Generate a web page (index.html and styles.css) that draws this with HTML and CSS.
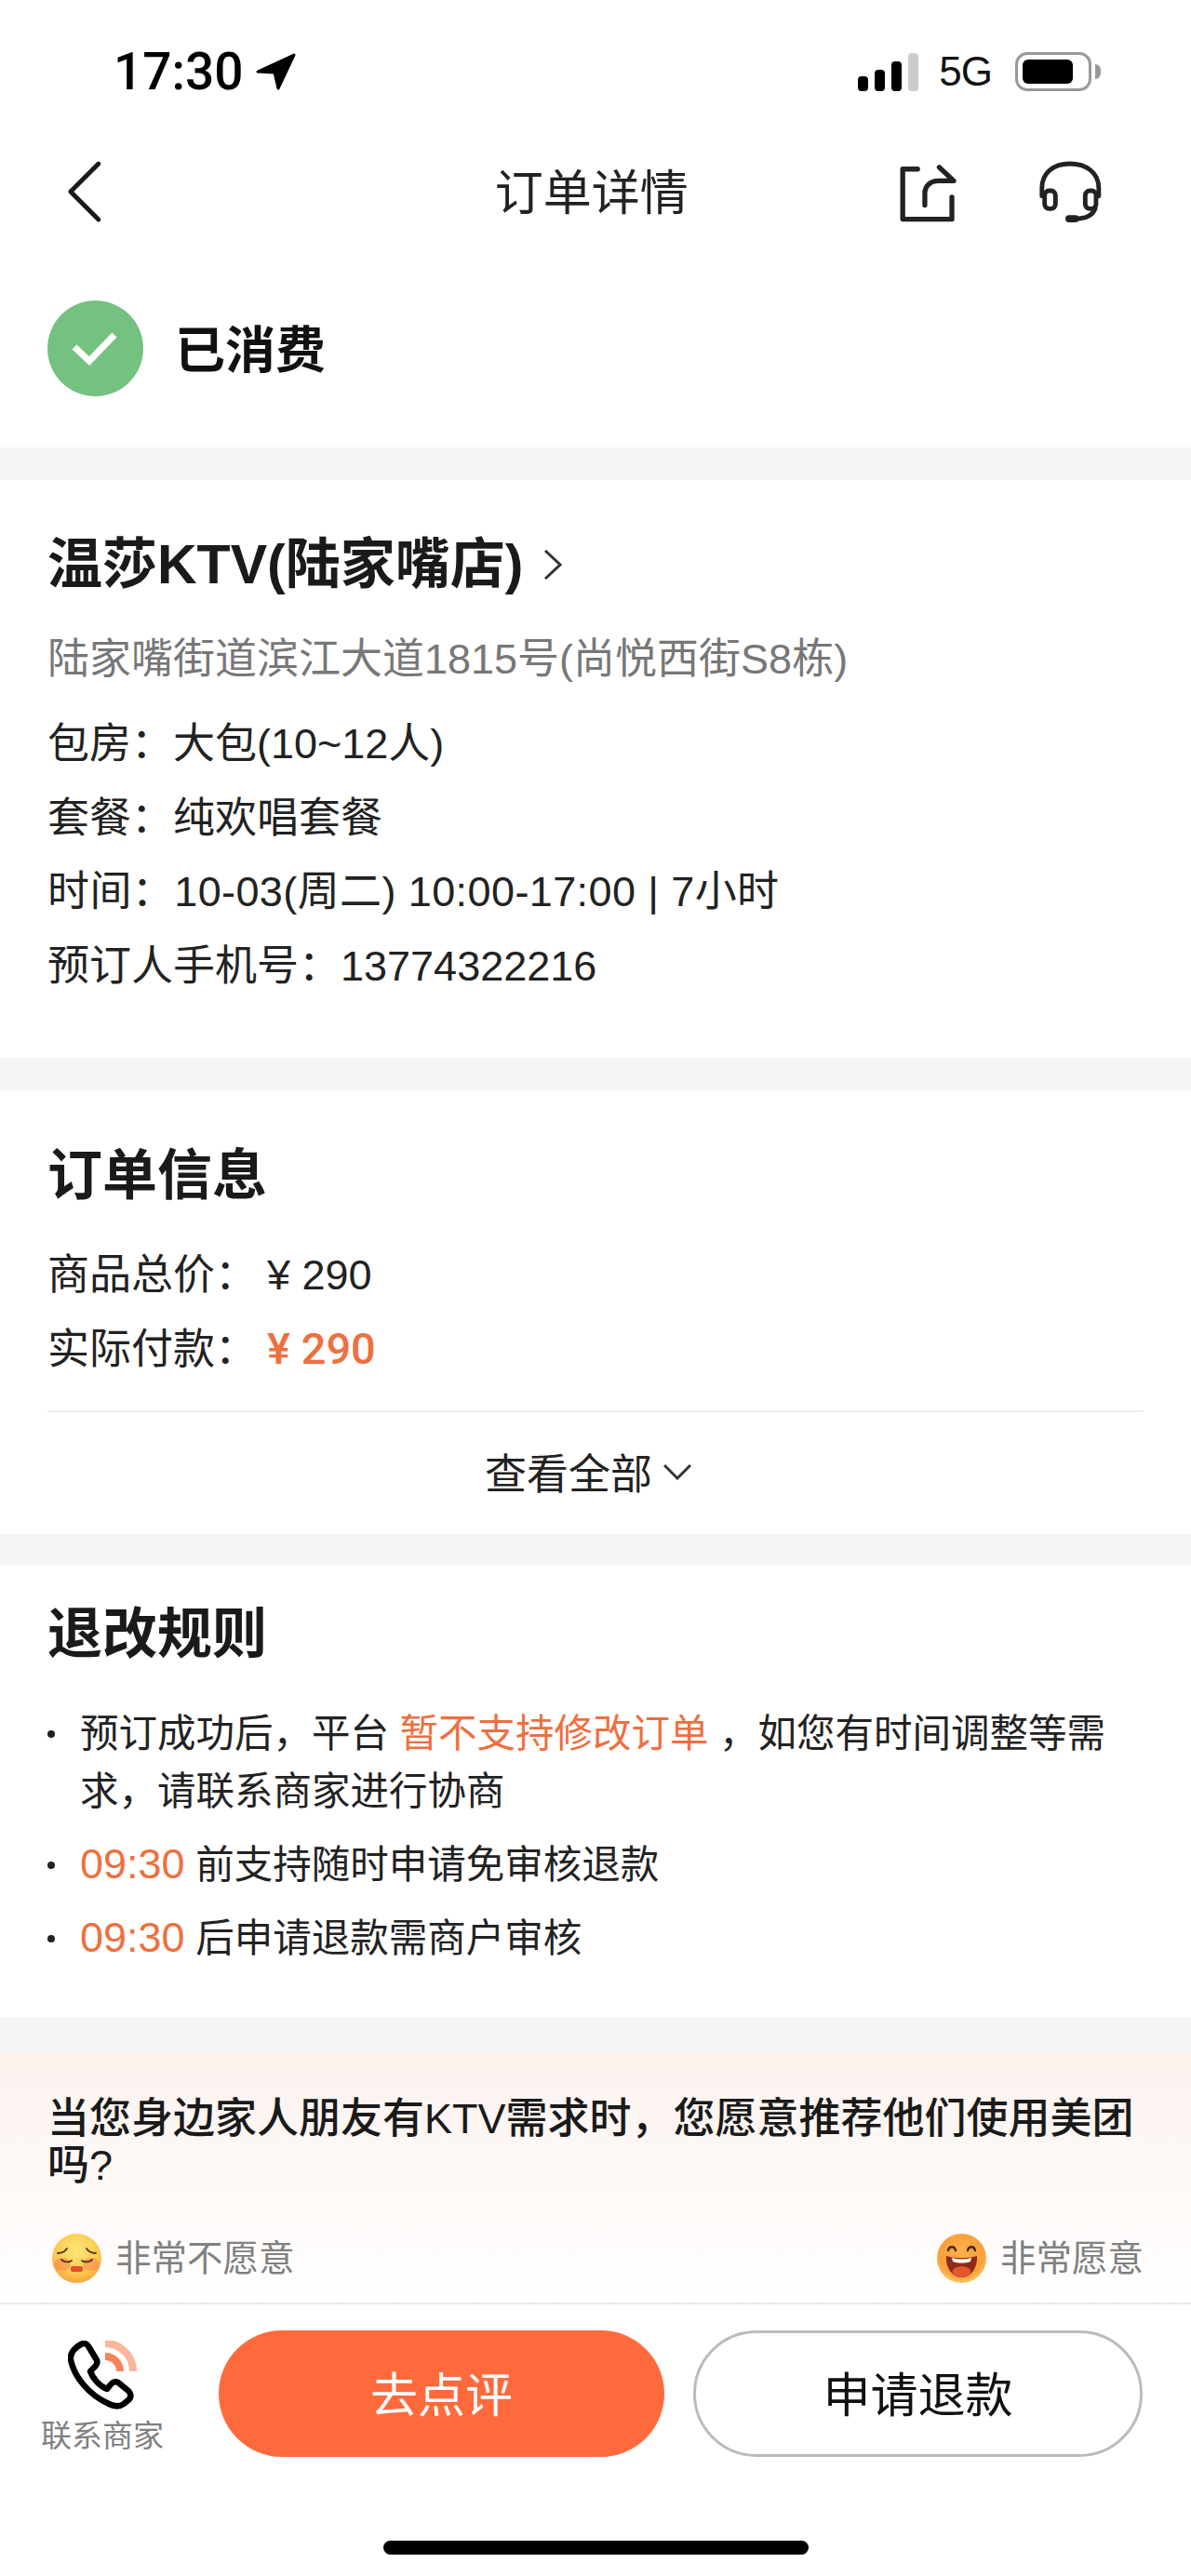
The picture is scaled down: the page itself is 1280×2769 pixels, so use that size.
FILE: index.html
```html
<!DOCTYPE html>
<html lang="zh-CN">
<head>
	<meta charset="UTF-8">
	<meta name="viewport" content="width=device-width, initial-scale=1.0">
	<title>订单详情</title>
	<link rel="stylesheet" href="styles.css">
</head>
<body>
	<div class="status-bar">
		<div class="status-left">
			<span class="time">17:30</span>
			<svg class="loc-icon" viewBox="0 0 43 40"><path d="M41 2 L2 20 L20 21 L24 38 Z" fill="#000" stroke="#000" stroke-width="3" stroke-linejoin="round"/></svg>
		</div>
		<div class="status-right">
			<div class="signal">
				<span class="bar bar-1"></span>
				<span class="bar bar-2"></span>
				<span class="bar bar-3"></span>
				<span class="bar bar-4"></span>
			</div>
			<span class="net">5G</span>
			<div class="battery"><span class="battery-fill"></span></div>
			<span class="battery-nub"></span>
		</div>
	</div>

	<div class="nav">
		<svg class="nav-back" viewBox="0 0 45 70"><path d="M37 4 L6 35 L37 66" fill="none" stroke="#1a1a1a" stroke-width="5" stroke-linecap="round" stroke-linejoin="round"/></svg>
		<h1 class="nav-title">订单详情</h1>
		<svg class="nav-share" viewBox="0 0 75 75" fill="none" stroke="#222" stroke-width="5.5" stroke-linecap="round" stroke-linejoin="round">
			<path d="M27 12 H10.5 V67.5 H65 V43"/>
			<path d="M51 10 L67 25 H50 C41 25 35 31 35 39 V52"/>
		</svg>
		<svg class="nav-help" viewBox="0 0 77 77" fill="none" stroke="#222" stroke-width="5" stroke-linecap="round" stroke-linejoin="round">
			<path d="M7 43 V34 C7 17 20 7 38 7 C56 7 70 17 70 34 V43"/>
			<rect x="10" y="37" width="12" height="20" rx="5"/>
			<rect x="55" y="37" width="12" height="20" rx="5"/>
			<path d="M66 57 C63 64 55 68 44 68"/>
			<path d="M37 68 H44" stroke-width="8"/>
		</svg>
	</div>

	<div class="state">
		<svg class="state-icon" viewBox="0 0 103 103">
			<circle cx="51.5" cy="51.5" r="51.5" fill="#74c180"/>
			<path d="M29 50 L45 65 L72 37" fill="none" stroke="#fff" stroke-width="7"/>
		</svg>
		<span class="state-text">已消费</span>
	</div>

	<div class="section store">
		<h2 class="store-name">温莎KTV(陆家嘴店)
			<svg class="store-arrow" viewBox="0 0 20 32"><path d="M2 1 L18 16 L2 31" fill="none" stroke="#333" stroke-width="3"/></svg>
		</h2>
		<p class="address">陆家嘴街道滨江大道1815号(尚悦西街S8栋)</p>
		<ul class="info-list">
			<li>包房：大包(10~12人)</li>
			<li>套餐：纯欢唱套餐</li>
			<li class="info-time">时间：10-03(周二) 10:00-17:00 | 7小时</li>
			<li>预订人手机号：13774322216</li>
		</ul>
	</div>

	<div class="section order">
		<h2 class="section-title">订单信息</h2>
		<ul class="info-list price-list">
			<li>商品总价：<span class="price">¥ 290</span></li>
			<li>实际付款：<span class="price price-paid">¥ 290</span></li>
		</ul>
		<div class="more">
			<span>查看全部</span>
			<svg class="more-arrow" viewBox="0 0 30 18"><path d="M1 2 L15 16 L29 2" fill="none" stroke="#333" stroke-width="3"/></svg>
		</div>
	</div>

	<div class="section rules">
		<h2 class="section-title">退改规则</h2>
		<ul class="rule-list">
			<li>预订成功后，平台 <span class="accent">暂不支持修改订单</span> ，如您有时间调整等需求，请联系商家进行协商</li>
			<li><span class="accent rule-time">09:30</span> 前支持随时申请免审核退款</li>
			<li><span class="accent rule-time">09:30</span> 后申请退款需商户审核</li>
		</ul>
	</div>

	<div class="survey">
		<p class="survey-title">当您身边家人朋友有KTV需求时，您愿意推荐他们使用美团吗?</p>
		<div class="survey-options">
			<div class="option option-low">
				<svg class="face" viewBox="0 0 53 53">
					<defs>
						<radialGradient id="skin-a" cx="50%" cy="35%" r="70%">
							<stop offset="0" stop-color="#fde678"/>
							<stop offset="0.65" stop-color="#fcc94f"/>
							<stop offset="1" stop-color="#f79a3e"/>
						</radialGradient>
					</defs>
					<circle cx="26.5" cy="26.5" r="26.5" fill="url(#skin-a)"/>
					<ellipse cx="11" cy="33" rx="9" ry="7" fill="#f9824e" opacity="0.55"/>
					<ellipse cx="42" cy="33" rx="9" ry="7" fill="#f9824e" opacity="0.55"/>
					<g fill="none" stroke="#4b3320" stroke-width="1.8" stroke-linecap="round">
						<path d="M6 21 C10 21 14 19 16 16"/>
						<path d="M47 21 C43 21 39 19 37 16"/>
						<path d="M10 28 C13 31 18 31 21 29"/>
						<path d="M43 28 C40 31 35 31 32 29"/>
					</g>
					<rect x="20" y="35" width="13" height="6" rx="2" fill="#e4512b"/>
				</svg>
				<span>非常不愿意</span>
			</div>
			<div class="option">
				<svg class="face" viewBox="0 0 53 53">
					<defs>
						<radialGradient id="skin-b" cx="50%" cy="40%" r="65%">
							<stop offset="0" stop-color="#fbb04a"/>
							<stop offset="0.7" stop-color="#f8a03c"/>
							<stop offset="1" stop-color="#f9d66a"/>
						</radialGradient>
					</defs>
					<circle cx="26.5" cy="26.5" r="26.5" fill="url(#skin-b)"/>
					<g fill="none" stroke="#4b2a18" stroke-width="2.4" stroke-linecap="round">
						<path d="M12 18 C13 13 19 13 20 18"/>
						<path d="M33 18 C34 13 40 13 41 18"/>
					</g>
					<path d="M10 24 C20 27 33 27 43 24 C44 37 36 47 26.5 47 C17 47 9 37 10 24 Z" fill="#8e2a16"/>
					<path d="M16 26 C23 28 30 28 37 26 L36 30 C30 32 23 32 17 30 Z" fill="#fff"/>
					<ellipse cx="26.5" cy="41" rx="10" ry="6" fill="#e4572c"/>
				</svg>
				<span>非常愿意</span>
			</div>
		</div>
	</div>

	<div class="footer">
		<div class="footer-row">
			<div class="contact">
				<svg class="contact-icon" viewBox="0 0 80 76" fill="none">
					<path d="M40 3 A30 30 0 0 1 70 33" stroke="#f9b79b" stroke-width="8"/>
					<path d="M40 17 A16 16 0 0 1 56 33" stroke="#f5845a" stroke-width="8"/>
					<path d="M14 4 C17 2 20 3 22 6 L31 21 C32 24 31 26 29 28 L24 33 C27 41 34 49 42 52 L47 46 C49 44 52 44 54 45 L65 54 C68 57 68 60 66 63 L60 68 C56 71 50 71 44 68 C22 58 6 38 3 20 C2 13 8 7 14 4 Z" stroke="#000" stroke-width="6.5" stroke-linejoin="round"/>
				</svg>
				<span class="contact-text">联系商家</span>
			</div>
			<button class="btn btn-main">去点评</button>
			<button class="btn btn-line">申请退款</button>
		</div>
		<div class="home-bar"></div>
	</div>
</body>
</html>
```

FILE: styles.css
```css
*{ box-sizing: border-box; }
body{
	margin: 0; width: 1280px; background: #fff; color: #222;
	font-family: "Liberation Sans", "Noto Sans CJK SC", sans-serif;
}
h1, h2, p, ul{ margin: 0; padding: 0; }
ul{ list-style: none; }

/* status bar */
.status-bar{
	display: flex; justify-content: space-between; align-items: center;
	height: 154px; padding: 0 97px 0 122px;
}
.status-left{ display: flex; align-items: center; gap: 13px; }
.time{ font-family: Roboto, sans-serif; font-weight: 500; font-size: 55px; line-height: 60px; color: #000; }
.loc-icon{ width: 43px; height: 40px; display: block; }
.status-right{ display: flex; align-items: center; }
.signal{ display: flex; align-items: flex-end; gap: 7px; height: 41px; }
.bar{ display: block; width: 11px; border-radius: 4px; background: #000; }
.bar-1{ height: 16px; }
.bar-2{ height: 23px; }
.bar-3{ height: 32px; }
.bar-4{ height: 41px; background: #ccc; }
.net{ font-size: 44px; line-height: 50px; margin-left: 22px; letter-spacing: -1px; color: #111; }
.battery{ width: 82px; height: 42px; margin-left: 25px; padding: 5px; border: 3px solid #999; border-radius: 13px; }
.battery-fill{ display: block; width: 54px; height: 26px; background: #000; border-radius: 6px; }
.battery-nub{ width: 6px; height: 16px; margin-left: 4px; background: #999; border-radius: 0 8px 8px 0; }

/* nav */
.nav{ display: flex; align-items: center; height: 104px; padding: 0 92px 0 70px; }
.nav-back{ width: 45px; height: 70px; display: block; }
.nav-title{ margin-left: 418px; width: 208px; padding-top: 3px; font-size: 52px; line-height: 70px; font-weight: 400; color: #222; white-space: nowrap; }
.nav-share{ margin-left: 220px; width: 75px; height: 75px; display: block; }
.nav-help{ margin-left: 81px; width: 77px; height: 77px; display: block; }

/* order state */
.state{ display: flex; align-items: center; padding: 65px 51px 55px; }
.state-icon{ width: 103px; height: 103px; display: block; }
.state-text{ margin-left: 34px; padding-top: 4px; font-size: 54px; line-height: 70px; font-weight: 700; color: #111; }

.section{ padding-left: 51px; padding-right: 51px; border-top: 35px solid #f5f5f5; }
.section-title{ font-size: 59px; line-height: 80px; font-weight: 700; color: #1a1a1a; }

/* store */
.store{ padding-top: 51px; padding-bottom: 59px; }
.store-name{ display: flex; align-items: center; font-size: 59px; line-height: 80px; font-weight: 700; color: #1a1a1a; }
.store-arrow{ width: 20px; height: 32px; margin-left: 22px; display: block; }
.address{ margin-top: 22px; font-size: 45px; line-height: 80px; color: #777; white-space: nowrap; }
.info-list{ margin-top: 11px; font-size: 45px; line-height: 79.5px; color: #222; }
.info-list li{ white-space: nowrap; }
.info-list .info-time{ letter-spacing: 0.4px; }

/* order info */
.order{ padding-top: 52px; }
.order .price-list{ margin-top: 27px; padding-bottom: 26px; border-bottom: 2px solid #eee; }
.price{ margin-left: 11px; }
.price-paid{ font-family: Roboto, sans-serif; font-size: 47px; line-height: 1; font-weight: 500; color: #ee6f3f; }
.more{ display: flex; justify-content: center; align-items: center; gap: 12px; height: 131px; padding: 0 16px 4px 0; font-size: 45px; color: #222; }
.more-arrow{ width: 30px; height: 18px; display: block; }

/* rules */
.rules{ border-top-width: 33px; padding-top: 35px; padding-bottom: 53px; }
.rule-list{ margin-top: 36px; font-size: 41.5px; line-height: 62px; color: #222; }
.rule-list li{ position: relative; padding-left: 35px; margin-bottom: 17px; }
.rule-list li:last-child{ margin-bottom: 0; }
.rule-list li::before{
	content: ""; position: absolute; left: 0; top: 27px;
	width: 8px; height: 8px; border-radius: 50%; background: #222;
}
.accent{ color: #ee6f3f; }
.rule-time{ font-size: 45px; line-height: 1; }

/* survey */
.survey-title{ font-size: 45px; line-height: 50px; font-weight: 500; color: #1a1a1a; }
.survey{
	border-top: 36px solid #f5f5f5; border-bottom: 2px solid #eaeaea;
	padding: 49px 51px 21px 51px;
	background: linear-gradient(#fcf2ee, #fff);
}
.survey-options{ display: flex; justify-content: space-between; margin-top: 48px; }
.option{ display: flex; align-items: center; gap: 15px; font-size: 38.5px; line-height: 53px; color: #808080; }
.option-low{ margin-left: 5px; }
.face{ width: 53px; height: 53px; display: block; }

/* footer */
.footer{ padding-top: 28px; }
.footer-row{ display: flex; align-items: flex-start; padding-left: 44px; }
.contact{ width: 132px; display: flex; flex-direction: column; align-items: center; padding-top: 11px; }
.contact-icon{ width: 80px; height: 76px; display: block; margin-left: 6px; }
.contact-text{ margin-top: 5px; font-size: 33px; line-height: 44px; color: #808080; white-space: nowrap; }
.btn{ height: 136px; border-radius: 68px; font-family: inherit; font-size: 51px; padding: 0 0 4px; }
.btn-main{ width: 479px; margin-left: 59px; border: 0; background: #ff6a3d; color: #fff; }
.btn-line{ width: 483px; margin-left: 31px; border: 3px solid #bbb; background: #fff; color: #111; }
.home-bar{ width: 457px; height: 15px; margin: 90px 0 0 412px; border-radius: 8px; background: #000; }
```
